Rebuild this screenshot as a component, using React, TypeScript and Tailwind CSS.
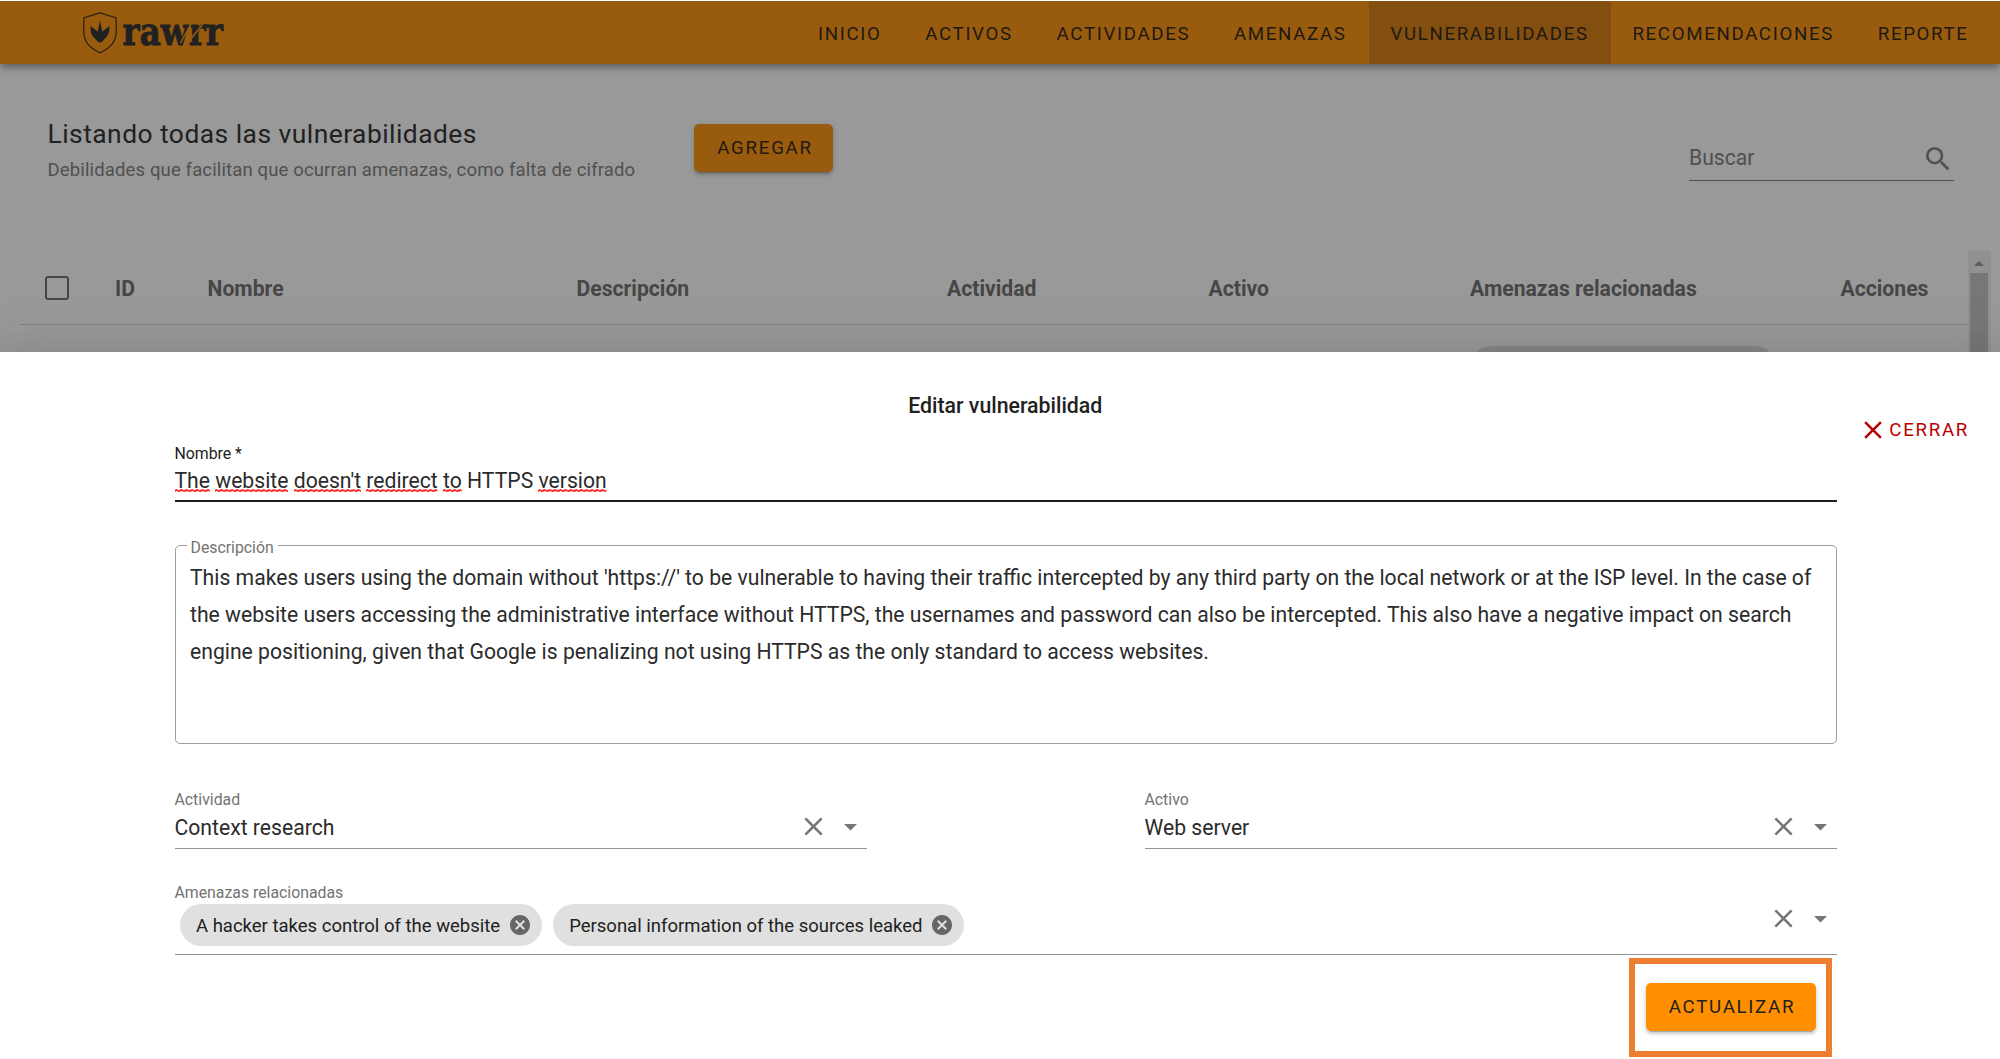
import React from "react";

const CLOSE = "M19,6.41L17.59,5L12,10.59L6.41,5L5,6.41L10.59,12L5,17.59L6.41,19L12,13.41L17.59,19L19,17.59L13.41,12L19,6.41Z";
const CARET = "M7,10L12,15L17,10H7Z";
const CLOSE_CIRCLE =
  "M12,2C17.53,2 22,6.47 22,12C22,17.53 17.53,22 12,22C6.47,22 2,17.53 2,12C2,6.47 6.47,2 12,2M15.59,7L12,10.59L8.41,7L7,8.41L10.59,12L7,15.59L8.41,17L12,13.41L15.59,17L17,15.59L13.41,12L17,8.41L15.59,7Z";
const MAGNIFY =
  "M9.5,3A6.5,6.5 0 0,1 16,9.5C16,11.11 15.41,12.59 14.44,13.73L14.71,14H15.5L20.5,19L19,20.5L14,15.5V14.71L13.73,14.44C12.59,15.41 11.11,16 9.5,16A6.5,6.5 0 0,1 3,9.5A6.5,6.5 0 0,1 9.5,3M9.5,5C7,5 5,7 5,9.5C5,12 7,14 9.5,14C12,14 14,12 14,9.5C14,7 12,5 9.5,5Z";

const NAV = ["INICIO", "ACTIVOS", "ACTIVIDADES", "AMENAZAS", "VULNERABILIDADES", "RECOMENDACIONES", "REPORTE"];
const COLUMNS = ["ID", "Nombre", "Descripción", "Actividad", "Activo", "Amenazas relacionadas", "Acciones"];

const NAME_WORDS = [
  { text: "The", misspelled: true },
  { text: "website", misspelled: true },
  { text: "doesn't", misspelled: true },
  { text: "redirect", misspelled: true },
  { text: "to", misspelled: true },
  { text: "HTTPS", misspelled: false },
  { text: "version", misspelled: true },
];

function Icon({ d, className }: { d: string; className: string }) {
  return (
    <svg viewBox="0 0 24 24" className={`shrink-0 fill-current ${className}`}>
      <path d={d} />
    </svg>
  );
}

function Logo() {
  return (
    <svg viewBox="0 0 144 56" className="ml-[82px] h-[56px] w-[144px]">
      <path d="M18 11.800 L34.200 17 V31 C34.200 41 26.500 48 18 51.800 C9.500 48 1.800 41 1.800 31 V17 Z" fill="none" stroke="#2f2415" strokeWidth="1.3" />
      <path d="M18 19.500 L20.300 30.500 L27.500 25 C27.500 30 27 33.500 24 36.500 L20.500 40.500 L18 41.800 L15.500 40.500 L12 36.500 C9 33.500 8.500 30 8.500 25 L15.700 30.500 Z" fill="#212121" />
      <text x="40.500" y="44.300" textLength="100.500" lengthAdjust="spacingAndGlyphs" fontFamily="DejaVu Serif" fontWeight="700" fontSize="40" fill="#212121" stroke="#212121" strokeWidth="0.900">
        rawrr
      </text>
      <path d="M110.500 20 L98.500 42 M122.500 21 L103.500 44.500 M108.500 22 L106 45" stroke="#995c0f" strokeWidth="1.5" fill="none" />
    </svg>
  );
}

function Squiggle() {
  return (
    <svg className="absolute top-[25px] left-0 h-[3px] w-full">
      <defs>
        <pattern id="squiggle" width="5.28" height="3" patternUnits="userSpaceOnUse">
          <path d="M-0.500 2.600 L1.320 0.800 L3.960 2.400 L5.780 0.600" fill="none" stroke="#ff1f1f" strokeWidth="1.500" />
        </pattern>
      </defs>
      <rect width="100%" height="3" fill="url(#squiggle)" />
    </svg>
  );
}

function SelectIcons({ className }: { className: string }) {
  return (
    <div className={`flex items-center pr-px text-[#757575] ${className}`}>
      <Icon d={CLOSE} className="size-[31px]" />
      <Icon d={CARET} className="ml-[6px] size-[31px]" />
    </div>
  );
}

function FieldLabel({ children }: { children: React.ReactNode }) {
  return <div className="text-[15.84px] leading-[20px] text-[#737373]">{children}</div>;
}

function Select({ label, value }: { label: string; value: string }) {
  return (
    <div className="w-[692.500px]">
      <FieldLabel>{label}</FieldLabel>
      <div className="flex h-[39px] items-start justify-between border-b border-[#949494]">
        <span className="leading-[35px] text-[#2b2b2b]">{value}</span>
        <SelectIcons className="mt-px" />
      </div>
    </div>
  );
}

function Chip({ text }: { text: string }) {
  return (
    <div className="flex h-[42px] items-center rounded-full bg-[#e0e0e0] pr-[10px] pl-[16px] text-[18.5px]">
      <span className="pt-[4px]">{text}</span>
      <Icon d={CLOSE_CIRCLE} className="ml-2 size-[24px] text-[#666]" />
    </div>
  );
}

export default function App() {
  return (
    <div className="relative h-[1059px] w-[2000px] overflow-hidden border-t border-white bg-[#999] font-['Roboto',sans-serif] text-[21.16px] text-[#212121]">
      <header className="relative flex h-[63px] items-start bg-[#995c0f] shadow-[0_3px_5px_-1px_rgba(0,0,0,0.2),0_5px_7px_0_rgba(0,0,0,0.14),0_1px_13px_0_rgba(0,0,0,0.12)]">
        <Logo />
        <nav className="ml-auto flex h-full pr-[9.500px] text-[18.7px] tracking-[1.65px] text-[#21190f]">
          {NAV.map((item) => (
            <div key={item} className={`flex h-full items-center px-[21.900px] pt-[4px] ${item === "VULNERABILIDADES" ? "bg-[#834f10]" : ""}`}>
              {item}
            </div>
          ))}
        </nav>
      </header>

      <section className="flex h-[187px] items-start pl-[47.500px]">
        <div className="w-[646.500px] pt-[49px]">
          <h1 className="text-[26.4px] leading-[42px] tracking-[0.47px]">Listando todas las vulnerabilidades</h1>
          <p className="mt-px text-[18.5px] leading-[28px] tracking-[0.14px] text-[#505050]">
            Debilidades que facilitan que ocurran amenazas, como falta de cifrado
          </p>
        </div>
        <button className="mt-[60px] h-[48px] w-[139px] rounded-[5px] bg-[#995c0f] pl-[3px] text-[18.7px] tracking-[1.75px] text-[#21190f] shadow-[0_4px_1px_-3px_rgba(0,0,0,0.2),0_3px_3px_0_rgba(0,0,0,0.14),0_1px_7px_0_rgba(0,0,0,0.12)]">
          AGREGAR
        </button>
        <div className="mt-[73px] mr-[46px] ml-auto flex h-[44px] w-[265px] items-start justify-between border-b border-[#505050] text-[#505050]">
          <span className="leading-[42px]">Buscar</span>
          <Icon d={MAGNIFY} className="mt-[6px] size-[32px]" />
        </div>
      </section>

      <section className="flex">
        <div className="ml-[20px] w-[1948px]">
          <div className="grid h-[74px] grid-cols-[70px_92.500px_369px_370.500px_261.500px_261.500px_370.500px_127px] items-center border-b border-[#7f7f7f] pl-[25px] font-bold text-[#464646]">
            <span className="size-[24px] rounded-[3px] border-[2.600px] border-[#464646]" />
            {COLUMNS.map((column) => (
              <span key={column} className="pt-[3px]">{column}</span>
            ))}
          </div>
          <div className="grid grid-cols-[1450px_306px] pt-[21px]">
            <span className="col-start-2 h-[42px] rounded-full bg-[#868686]" />
          </div>
        </div>
        <div className="flex h-[300px] w-[22.500px] flex-col items-center bg-[#919191]">
          <svg viewBox="0 0 10 5" className="mt-[10px] h-[5px] w-[10px]">
            <path d="M5 0 L10 5 H0 Z" fill="#5c5c5c" />
          </svg>
          <div className="mt-[7px] w-[18px] flex-1 bg-[#777]" />
        </div>
      </section>

      <div className="absolute inset-x-0 top-[351px] bottom-0 bg-white pr-[163px] pl-[174.500px] shadow-[0_14px_20px_-9px_rgba(0,0,0,0.2),0_32px_50px_4px_rgba(0,0,0,0.14),0_12px_61px_11px_rgba(0,0,0,0.12)]">
        <button className="absolute top-[62px] right-[31px] flex items-center text-[18.7px] leading-[32px] tracking-[1.7px] text-[#b80000]">
          <Icon d={CLOSE} className="mr-px size-[30px]" />
          CERRAR
        </button>

        <h2 className="mt-[38px] pr-px text-center text-[21.3px] leading-[32px] font-medium">Editar vulnerabilidad</h2>

        <div className="mt-[22px] text-[15.84px] leading-[20px]">Nombre *</div>
        <div className="h-[38px] border-b-2 border-[#1e1e1e] leading-[33px] text-[#2b2b2b]">
          {NAME_WORDS.map(({ text, misspelled }) => (
            <React.Fragment key={text}>
              <span className="relative inline-block">
                {text}
                {misspelled && <Squiggle />}
              </span>{" "}
            </React.Fragment>
          ))}
        </div>

        <div className="relative mt-[43px] h-[199px] rounded-[5px] border border-[#9e9e9e] pt-[12.500px] pl-[14.500px] leading-[37px] text-[#2b2b2b]">
          <span className="absolute top-[-8.500px] left-[11px] bg-white px-[4px] text-[15.84px] leading-[20px] text-[#737373]">Descripción</span>
          <p className="whitespace-nowrap">
            This makes users using the domain without 'https://' to be vulnerable to having their traffic intercepted by any third party on the local network or at the ISP level. In the case of
            <br />
            the website users accessing the administrative interface without HTTPS, the usernames and password can also be intercepted. This also have a negative impact on search
            <br />
            engine positioning, given that Google is penalizing not using HTTPS as the only standard to access websites.
          </p>
        </div>

        <div className="mt-[46px] flex justify-between">
          <Select label="Actividad" value="Context research" />
          <Select label="Activo" value="Web server" />
        </div>

        <div className="mt-[34px]">
          <FieldLabel>Amenazas relacionadas</FieldLabel>
          <div className="mt-px flex h-[51px] items-start border-b border-[#949494] pl-[5.500px]">
            <div className="flex gap-[11px]">
              <Chip text="A hacker takes control of the website" />
              <Chip text="Personal information of the sources leaked" />
            </div>
            <SelectIcons className="mt-[-1px] ml-auto" />
          </div>
        </div>

        <div className="mt-[3px] mr-[5px] ml-auto flex h-[99px] w-[203px] items-start border-[6px] border-[#ed7d31] pt-[19px] pl-[11px]">
          <button className="h-[48px] w-[170px] rounded-[5px] bg-[#ff8f00] pl-[2px] text-[18.7px] tracking-[1.7px] shadow-[0_4px_1px_-3px_rgba(0,0,0,0.2),0_3px_3px_0_rgba(0,0,0,0.14),0_1px_7px_0_rgba(0,0,0,0.12)]">
            ACTUALIZAR
          </button>
        </div>
      </div>
    </div>
  );
}
